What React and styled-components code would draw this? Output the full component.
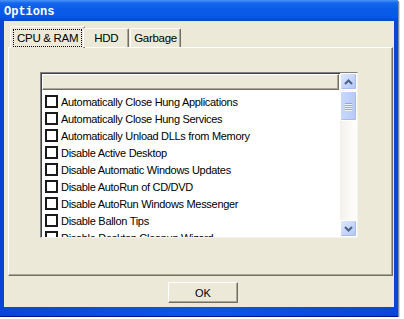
import React from 'react';
import styled, { createGlobalStyle } from 'styled-components';

const GlobalStyle = createGlobalStyle`
  html, body {
    margin: 0;
    padding: 0;
    background: #ffffff;
  }
  body {
    font-family: "Liberation Sans", Arial, sans-serif;
    font-size: 11px;
    color: #000;
  }
`;

const items = [
  'Automatically Close Hung Applications',
  'Automatically Close Hung Services',
  'Automatically Unload DLLs from Memory',
  'Disable Active Desktop',
  'Disable Automatic Windows Updates',
  'Disable AutoRun of CD/DVD',
  'Disable AutoRun Windows Messenger',
  'Disable Ballon Tips',
  'Disable Desktop Cleanup Wizard',
];

////////////////////////////////////////////////////////////////////////////////

const Window = styled.div`
  width: 398px;
  height: 317px;
  display: flex;
  flex-direction: column;
  background: #0a4ee0;
  box-shadow: 1px 1px 0 #7d8aa8, 2px 2px 0 #d6d6d6;
`;

const TitleBar = styled.div`
  height: 21px;
  box-sizing: border-box;
  flex: none;
  display: flex;
  align-items: center;
  padding: 3px 0 0 4px;
  background: linear-gradient(#4a95f8 0%, #1565ec 15%, #0a5ce8 45%, #0758e6 80%, #0049d2 100%);
  color: #fff;
  font-family: "Liberation Mono", "Courier New", monospace;
  font-weight: 700;
  font-size: 12px;
`;

const Frame = styled.div`
  flex: 1;
  display: flex;
  padding: 0 4px 9px 4px;
  background: linear-gradient(90deg, #0a45d8, #0c55e8 50%, #0a45d8);
  border-bottom: 1px solid #00138c;
`;

const Client = styled.div`
  flex: 1;
  display: flex;
  flex-direction: column;
  background: #ece9d8;
  padding-top: 4px;
`;

////////////////////////////////////////////////////////////////////////////////

const TabRow = styled.div`
  height: 22px;
  display: flex;
  align-items: flex-end;
  padding-left: 6px;
  position: relative;
  z-index: 1;
`;

const Tab = styled.div`
  height: ${p => (p.active ? '22px' : '19px')};
  margin: ${p => (p.active ? '0 -2px -1px 0' : '0')};
  box-sizing: border-box;
  display: flex;
  align-items: center;
  padding: 0 ${p => p.pad}px;
  background: #ece9d8;
  border-top: 1px solid #fff;
  border-left: 1px solid #fff;
  border-right: 1px solid #716f64;
  box-shadow: inset -1px 0 0 #aca899;
  border-radius: 2px 2px 0 0;
  letter-spacing: -0.3px;
  font-size: 11.5px;
`;

const TabSpacer = styled.div`
  width: ${p => p.w}px;
`;

const FocusLabel = styled.span`
  outline: 1px dotted #000;
  padding: 2px 3px;
  margin-top: 1px;
`;

const Panel = styled.div`
  height: 229px;
  box-sizing: border-box;
  margin: 0 1px 0 4px;
  border-top: 1px solid #fff;
  border-left: 1px solid #fff;
  border-right: 1px solid #716f64;
  border-bottom: 1px solid #716f64;
  box-shadow: inset -1px -1px 0 #aca899;
  padding: 24px 0 0 31px;
`;

////////////////////////////////////////////////////////////////////////////////

const ListBox = styled.div`
  width: 318px;
  height: 166px;
  box-sizing: border-box;
  display: flex;
  background: #fff;
  border-top: 1px solid #808080;
  border-left: 1px solid #808080;
  border-right: 1px solid #f4f3ee;
  border-bottom: 1px solid #f4f3ee;
  box-shadow: inset 1px 1px 0 #404040;
`;

const ListBody = styled.div`
  flex: 1;
  overflow: hidden;
  padding-left: 1px;
  padding-top: 1px;
`;

const Header = styled.div`
  height: 16px;
  box-sizing: border-box;
  margin-right: 1px;
  background: #ece9d8;
  border-top: 1px solid #fff;
  border-left: 1px solid #fff;
  border-right: 1px solid #716f64;
  border-bottom: 1px solid #716f64;
  box-shadow: inset -1px -1px 0 #aca899;
`;

const Rows = styled.div`
  padding-top: 3px;
`;

const Row = styled.div`
  height: 17px;
  display: flex;
  align-items: center;
  padding-left: 3px;
  white-space: nowrap;
  letter-spacing: -0.3px;
`;

const Check = styled.span`
  width: 13px;
  height: 13px;
  box-sizing: border-box;
  flex: none;
  background: #fff;
  border: 2px solid #1a1a1a;
  margin-right: 3px;
`;

////////////////////////////////////////////////////////////////////////////////

const ScrollBar = styled.div`
  width: 17px;
  flex: none;
  display: flex;
  flex-direction: column;
  background: linear-gradient(90deg, #f3f1ec, #fefefb);
`;

const ScrollButton = styled.div`
  width: 17px;
  height: 17px;
  box-sizing: border-box;
  display: flex;
  align-items: center;
  justify-content: center;
  border: 1px solid #fff;
  border-radius: 2px;
  background: linear-gradient(135deg, #e0e9fd, #c1d3fb 60%, #b1c6f5);
  box-shadow: inset -1px -1px 0 #a9bde8;
`;

const Thumb = styled.div`
  margin-top: 1px;
  height: 30px;
  box-sizing: border-box;
  border: 1px solid #fff;
  border-radius: 2px;
  background: linear-gradient(90deg, #c8d8fb, #bfd0fa 50%, #b6c9f5);
  box-shadow: inset -1px -1px 0 #a8bcea;
  display: flex;
  flex-direction: column;
  align-items: center;
  justify-content: center;
  gap: 1px;
`;

const Grip = styled.div`
  width: 7px;
  height: 1px;
  background: #8fa8e0;
  box-shadow: 0 1px 0 #eef3fe;
`;

const Track = styled.div`
  flex: 1;
`;

const Chevron = ({ up }) => (
  <svg width="9" height="6" viewBox="0 0 9 6">
    <path
      d={up ? 'M1 5 L4.5 1.5 L8 5' : 'M1 1 L4.5 4.5 L8 1'}
      fill="none"
      stroke="#4d6185"
      strokeWidth="2"
    />
  </svg>
);

////////////////////////////////////////////////////////////////////////////////

const Footer = styled.div`
  display: flex;
  justify-content: center;
  padding: 6px 0 0 8px;
`;

const Button = styled.button`
  width: 70px;
  height: 21px;
  box-sizing: border-box;
  background: #ece9d8;
  font-family: "Liberation Sans", Arial, sans-serif;
  font-size: 11px;
  color: #000;
  border-top: 1px solid #fff;
  border-left: 1px solid #fff;
  border-right: 1px solid #716f64;
  border-bottom: 1px solid #716f64;
  box-shadow: inset -1px -1px 0 #aca899;
  padding: 0;
`;

////////////////////////////////////////////////////////////////////////////////

const App = () => (
  <>
    <GlobalStyle />
    <Window>
      <TitleBar>Options</TitleBar>
      <Frame>
        <Client>
          <TabRow>
            <Tab active pad={3}>
              <FocusLabel>CPU &amp; RAM</FocusLabel>
            </Tab>
            <Tab pad={10}>HDD</Tab>
            <TabSpacer w={1} />
            <Tab pad={3}>Garbage</Tab>
          </TabRow>
          <Panel>
            <ListBox>
              <ListBody>
                <Header />
                <Rows>
                  {items.map(label => (
                    <Row key={label}>
                      <Check />
                      {label}
                    </Row>
                  ))}
                </Rows>
              </ListBody>
              <ScrollBar>
                <ScrollButton>
                  <Chevron up />
                </ScrollButton>
                <Thumb>
                  <Grip />
                  <Grip />
                  <Grip />
                  <Grip />
                </Thumb>
                <Track />
                <ScrollButton>
                  <Chevron />
                </ScrollButton>
              </ScrollBar>
            </ListBox>
          </Panel>
          <Footer>
            <Button>OK</Button>
          </Footer>
        </Client>
      </Frame>
    </Window>
  </>
);

export default App;
